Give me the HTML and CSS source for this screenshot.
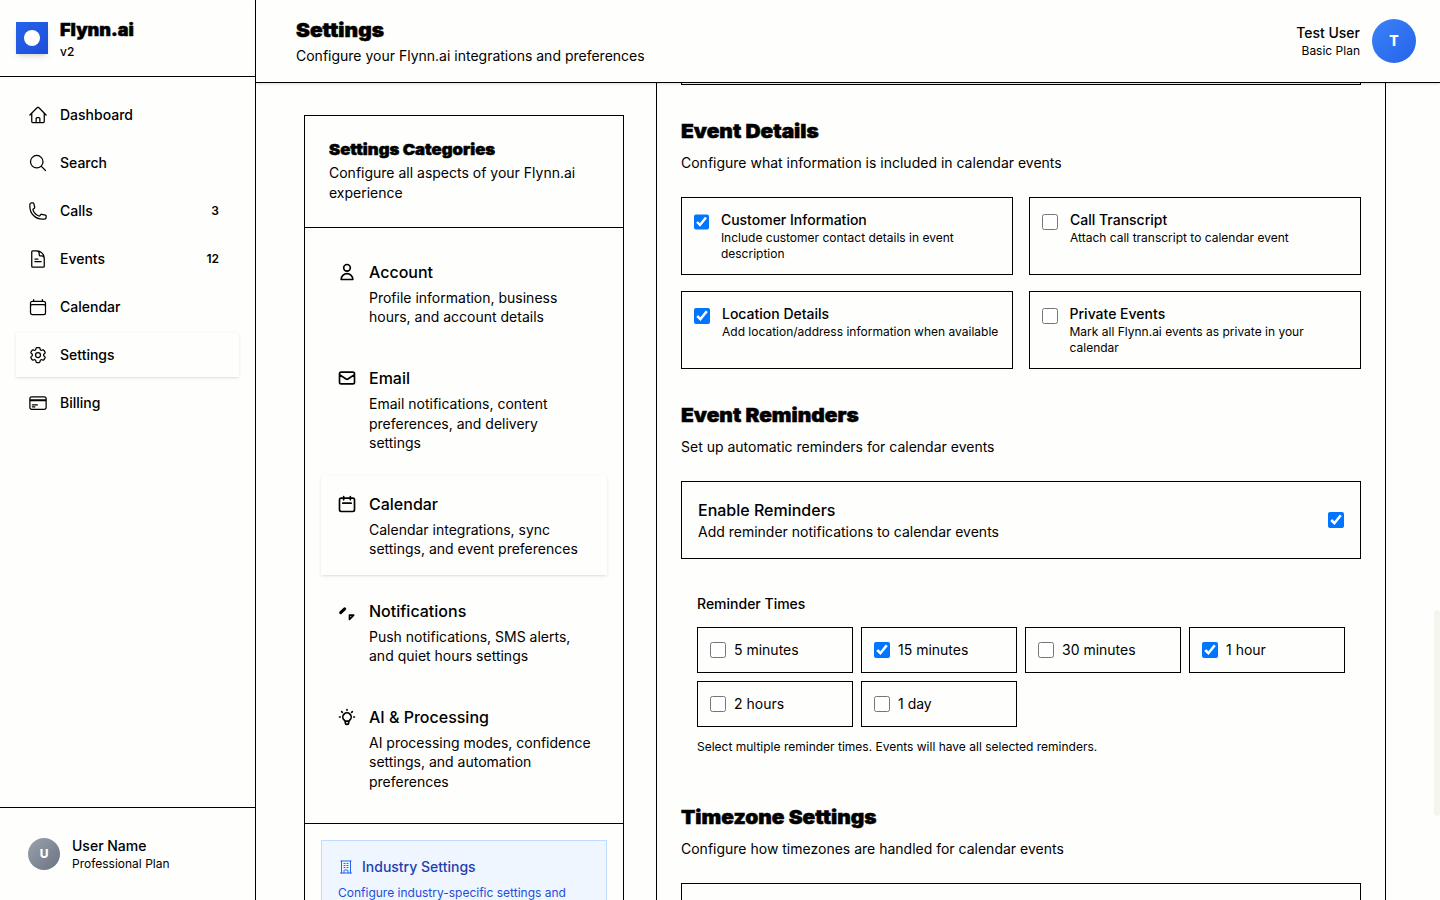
FILE: index.html
```html
<!DOCTYPE html>
<html lang="en">
<head>
<meta charset="utf-8">
<title>Settings - Flynn.ai</title>
<link rel="stylesheet" href="styles.css">
</head>
<body>
<div class="app">
  <aside class="sidebar">
    <div class="brand">
      <div class="logo"><span class="logo-dot"></span></div>
      <div><div class="display brand-name">Flynn.ai</div><div class="brand-version">v2</div></div>
    </div>
    <nav class="nav">
      <a class="nav-item"><svg class="icon" viewBox="0 0 24 24"><path d="M2.25 12l8.954-8.955c.44-.439 1.152-.439 1.591 0L21.75 12M4.5 9.75v10.125c0 .621.504 1.125 1.125 1.125H9.75v-4.875c0-.621.504-1.125 1.125-1.125h2.25c.621 0 1.125.504 1.125 1.125V21h4.125c.621 0 1.125-.504 1.125-1.125V9.75M8.25 21h8.25"/></svg><span>Dashboard</span></a>
      <a class="nav-item"><svg class="icon" viewBox="0 0 24 24"><path d="M21 21l-5.197-5.197m0 0A7.5 7.5 0 105.196 5.196a7.5 7.5 0 0010.607 10.607z"/></svg><span>Search</span></a>
      <a class="nav-item"><svg class="icon" viewBox="0 0 24 24"><path d="M2.25 6.75c0 8.284 6.716 15 15 15h2.25a2.25 2.25 0 002.25-2.25v-1.372c0-.516-.351-.966-.852-1.091l-4.423-1.106c-.44-.11-.902.055-1.173.417l-.97 1.293c-.282.376-.769.542-1.21.38a12.035 12.035 0 01-7.143-7.143c-.162-.441.004-.928.38-1.21l1.293-.97c.363-.271.527-.734.417-1.173L6.963 3.102a1.125 1.125 0 00-1.091-.852H4.5A2.25 2.25 0 002.25 4.5v2.25z"/></svg><span>Calls</span><span class="count">3</span></a>
      <a class="nav-item"><svg class="icon" viewBox="0 0 24 24"><path d="M19.5 14.25v-2.625a3.375 3.375 0 00-3.375-3.375h-1.5A1.125 1.125 0 0113.5 7.125v-1.5a3.375 3.375 0 00-3.375-3.375H8.25M8.25 15h7.5M8.25 12H12M10.5 2.25H5.625c-.621 0-1.125.504-1.125 1.125v17.25c0 .621.504 1.125 1.125 1.125h12.75c.621 0 1.125-.504 1.125-1.125V11.25a9 9 0 00-9-9z"/></svg><span>Events</span><span class="count">12</span></a>
      <a class="nav-item"><svg class="icon" viewBox="0 0 24 24"><path d="M6.75 3v2.25M17.25 3v2.25M3 18.75V7.5a2.25 2.25 0 012.25-2.25h13.5A2.25 2.25 0 0121 7.5v11.25m-18 0A2.25 2.25 0 005.25 21h13.5A2.25 2.25 0 0021 18.75m-18 0v-7.5A2.25 2.25 0 015.25 9h13.5A2.25 2.25 0 0121 11.25v7.5"/></svg><span>Calendar</span></a>
      <a class="nav-item active"><svg class="icon" viewBox="0 0 24 24"><path d="M9.594 3.94c.09-.542.56-.94 1.11-.94h2.593c.55 0 1.02.398 1.11.94l.213 1.281c.063.374.313.686.645.87.074.04.147.083.22.127.324.196.72.257 1.075.124l1.217-.456a1.125 1.125 0 011.37.49l1.296 2.247a1.125 1.125 0 01-.26 1.431l-1.003.827c-.293.24-.438.613-.431.992a6.759 6.759 0 010 .255c-.007.378.138.75.43.99l1.005.828c.424.35.534.954.26 1.43l-1.298 2.247a1.125 1.125 0 01-1.369.491l-1.217-.456c-.355-.133-.75-.072-1.076.124a6.57 6.57 0 01-.22.128c-.331.183-.581.495-.644.869l-.213 1.28c-.09.543-.56.941-1.11.941h-2.594c-.55 0-1.02-.398-1.11-.94l-.213-1.281c-.062-.374-.312-.686-.644-.87a6.52 6.52 0 01-.22-.127c-.325-.196-.72-.257-1.076-.124l-1.217.456a1.125 1.125 0 01-1.369-.49l-1.297-2.247a1.125 1.125 0 01.26-1.431l1.004-.827c.292-.24.437-.613.43-.992a6.932 6.932 0 010-.255c.007-.378-.138-.75-.43-.99l-1.004-.828a1.125 1.125 0 01-.26-1.43l1.297-2.247a1.125 1.125 0 011.37-.491l1.216.456c.356.133.751.072 1.076-.124.072-.044.146-.087.22-.128.332-.183.582-.495.644-.869l.214-1.281z"/><path d="M15 12a3 3 0 11-6 0 3 3 0 016 0z"/></svg><span>Settings</span></a>
      <a class="nav-item"><svg class="icon" viewBox="0 0 24 24"><path d="M2.25 8.25h19.5M2.25 9h19.5m-16.5 5.25h6m-6 2.25h3m-3.75 3h15a2.25 2.25 0 002.25-2.25V6.75A2.25 2.25 0 0019.5 4.5h-15a2.25 2.25 0 00-2.25 2.25v10.5A2.25 2.25 0 004.5 19.5z"/></svg><span>Billing</span></a>
    </nav>
    <div class="account">
      <div class="avatar avatar-gray">U</div>
      <div><div class="person">User Name</div><div class="plan">Professional Plan</div></div>
    </div>
  </aside>

  <div class="main">
    <header class="topbar">
      <div>
        <h1 class="display page-title">Settings</h1>
        <p class="page-desc">Configure your Flynn.ai integrations and preferences</p>
      </div>
      <div class="profile">
        <div class="profile-text"><div class="person">Test User</div><div class="plan">Basic Plan</div></div>
        <div class="avatar avatar-blue">T</div>
      </div>
    </header>

    <div class="content">
      <section class="categories">
        <div class="categories-head">
          <h2 class="display categories-title">Settings Categories</h2>
          <p class="categories-desc">Configure all aspects of your Flynn.ai experience</p>
        </div>
        <div class="category-list">
          <div class="category"><svg class="icon bold" viewBox="0 0 24 24"><path d="M16 7a4 4 0 11-8 0 4 4 0 018 0zM12 14a7 7 0 00-7 7h14a7 7 0 00-7-7z"/></svg><div><div class="category-name">Account</div><p class="category-desc">Profile information, business hours, and account details</p></div></div>
          <div class="category"><svg class="icon bold" viewBox="0 0 24 24"><path d="M3 8l7.89 5.26a2 2 0 002.22 0L21 8M5 19h14a2 2 0 002-2V7a2 2 0 00-2-2H5a2 2 0 00-2 2v10a2 2 0 002 2z"/></svg><div><div class="category-name">Email</div><p class="category-desc">Email notifications, content preferences, and delivery settings</p></div></div>
          <div class="category active"><svg class="icon bold" viewBox="0 0 24 24"><path d="M8 7V3m8 4V3m-9 8h10M5 21h14a2 2 0 002-2V7a2 2 0 00-2-2H5a2 2 0 00-2 2v12a2 2 0 002 2z"/></svg><div><div class="category-name">Calendar</div><p class="category-desc">Calendar integrations, sync settings, and event preferences</p></div></div>
          <div class="category"><svg class="icon bold" viewBox="0 0 24 24"><path d="M15 17h5l-5 5v-5z"/><path stroke-width="3.6" class="dash" d="M4.4 14L9.2 9.4"/></svg><div><div class="category-name">Notifications</div><p class="category-desc">Push notifications, SMS alerts, and quiet hours settings</p></div></div>
          <div class="category"><svg class="icon bold" viewBox="0 0 24 24"><path d="M9.663 17h4.673M12 3v1m6.364 1.636l-.707.707M21 12h-1M4 12H3m3.343-5.657l-.707-.707m2.828 9.9a5 5 0 117.072 0l-.548.547A3.374 3.374 0 0014 18.469V19a2 2 0 11-4 0v-.531c0-.895-.356-1.754-.988-2.386l-.548-.547z"/></svg><div><div class="category-name">AI &amp; Processing</div><p class="category-desc">AI processing modes, confidence settings, and automation preferences</p></div></div>
        </div>
        <div class="industry-wrap">
          <div class="industry">
            <div class="industry-head"><svg class="icon small" viewBox="0 0 24 24"><path d="M3.75 21h16.5M4.5 3h15M5.25 3v18m13.5-18v18M9 6.75h1.5m-1.5 3h1.5m-1.5 3h1.5m3-6H15m-1.5 3H15m-1.5 3H15M9 21v-3.375c0-.621.504-1.125 1.125-1.125h3.75c.621 0 1.125.504 1.125 1.125V21"/></svg><span>Industry Settings</span></div>
            <p class="industry-desc">Configure industry-specific settings and</p>
          </div>
        </div>
      </section>

      <section class="panel">
        <div class="previous-box"></div>
        <div class="group">
          <h2 class="display group-title">Event Details</h2>
          <p class="group-desc">Configure what information is included in calendar events</p>
          <div class="options">
            <label class="option"><input type="checkbox" checked><div><div class="option-name">Customer Information</div><div class="option-desc">Include customer contact details in event description</div></div></label>
            <label class="option"><input type="checkbox"><div><div class="option-name">Call Transcript</div><div class="option-desc">Attach call transcript to calendar event</div></div></label>
            <label class="option"><input type="checkbox" checked><div><div class="option-name">Location Details</div><div class="option-desc">Add location/address information when available</div></div></label>
            <label class="option"><input type="checkbox"><div><div class="option-name">Private Events</div><div class="option-desc">Mark all Flynn.ai events as private in your calendar</div></div></label>
          </div>
        </div>
        <div class="group">
          <h2 class="display group-title">Event Reminders</h2>
          <p class="group-desc">Set up automatic reminders for calendar events</p>
          <label class="toggle-row"><div><div class="toggle-name">Enable Reminders</div><div class="toggle-desc">Add reminder notifications to calendar events</div></div><input type="checkbox" checked></label>
          <div class="reminders">
            <div class="reminders-label">Reminder Times</div>
            <div class="times">
              <label class="time"><input type="checkbox"><span>5 minutes</span></label>
              <label class="time"><input type="checkbox" checked><span>15 minutes</span></label>
              <label class="time"><input type="checkbox"><span>30 minutes</span></label>
              <label class="time"><input type="checkbox" checked><span>1 hour</span></label>
              <label class="time"><input type="checkbox"><span>2 hours</span></label>
              <label class="time"><input type="checkbox"><span>1 day</span></label>
            </div>
            <p class="hint">Select multiple reminder times. Events will have all selected reminders.</p>
          </div>
        </div>
        <div class="group">
          <h2 class="display group-title">Timezone Settings</h2>
          <p class="group-desc">Configure how timezones are handled for calendar events</p>
          <div class="timezone-box"></div>
        </div>
      </section>
      <div class="scroll-thumb"></div>
    </div>
  </div>
</div>
</body>
</html>
```
FILE: styles.css
```css
* { box-sizing: border-box; }
body, h1, h2, p { margin: 0; }
body {
  background: #fefefc;
  color: #000;
  font: 400 14px/20px Inter, "Liberation Sans", sans-serif;
}
.app { display: flex; width: 1440px; height: 900px; overflow: hidden; }
.display {
  font-weight: 900;
  -webkit-text-stroke: 0.5px #000;
  transform: translateY(1px) scaleX(1.1);
  transform-origin: left center;
  width: max-content;
}

.icon {
  width: 20px; height: 20px; flex: none;
  fill: none; stroke: currentColor; stroke-width: 1.5;
  stroke-linecap: round; stroke-linejoin: round;
}
.icon.bold { stroke-width: 2; }
.icon.small { width: 16px; height: 16px; color: #2563eb; }

/* Sidebar */
.sidebar { width: 256px; display: flex; flex-direction: column; border-right: 1px solid #000; }
.brand { height: 77px; display: flex; align-items: center; gap: 12px; padding: 0 16px; border-bottom: 1px solid #000; }
.logo {
  width: 32px; height: 32px; display: grid; place-items: center;
  background: linear-gradient(135deg, #2563eb, #1d4ed8);
  box-shadow: 0 4px 6px -1px rgba(0, 0, 0, .1), 0 2px 4px -2px rgba(0, 0, 0, .1);
}
.logo-dot { width: 16px; height: 16px; border-radius: 50%; background: #fff; }
.brand-name { font-size: 17.2px; line-height: 28px; transform: scaleX(1.05); }
.brand-version { font-size: 12px; line-height: 16px; font-weight: 500; }
.nav { flex: 1; display: flex; flex-direction: column; gap: 4px; padding: 16px; }
.nav-item { height: 44px; display: flex; align-items: center; gap: 12px; padding: 0 12px; font-weight: 500; }
.active { box-shadow: 0 1px 3px rgba(0, 0, 0, .1), 0 1px 2px -1px rgba(0, 0, 0, .1); }
.count { margin-left: auto; padding-right: 8px; font-size: 12px; font-weight: 600; }
.account { height: 93px; display: flex; align-items: center; gap: 12px; padding: 0 28px; border-top: 1px solid #000; }
.avatar { display: grid; place-items: center; border-radius: 50%; color: #fff; font-weight: 800; }
.avatar-gray { width: 32px; height: 32px; font-size: 12px; background: linear-gradient(135deg, #9ca3af, #6b7280); }
.avatar-blue { width: 44px; height: 44px; background: linear-gradient(135deg, #3b82f6, #2563eb); }
.person { font-weight: 500; line-height: 20px; }
.plan { font-size: 12px; line-height: 16px; }

/* Top bar */
.main { flex: 1; min-width: 0; display: flex; flex-direction: column; }
.topbar {
  height: 83px; flex: none; z-index: 1;
  display: flex; align-items: center; justify-content: space-between;
  padding: 0 24px 0 40px; border-bottom: 1px solid #000;
  box-shadow: 0 1px 3px rgba(0, 0, 0, .1), 0 1px 2px -1px rgba(0, 0, 0, .1);
}
.page-title { font-size: 19px; line-height: 28px; }
.page-desc { margin-top: 2px; }
.profile { display: flex; align-items: center; gap: 12px; }
.profile-text { text-align: right; }

/* Settings categories */
.content { position: relative; flex: 1; min-height: 0; display: flex; align-items: stretch; padding: 0 54px 0 48px; overflow: hidden; }
.categories { width: 320px; flex: none; margin: 32px 32px 0 0; border: 1px solid #000; border-bottom: 0; }
.categories-head { height: 112px; padding: 23px 24px; border-bottom: 1px solid #000; }
.categories-title { font-size: 15.2px; line-height: 20px; }
.categories-desc { margin-top: 4px; line-height: 19.6px; }
.category-list { display: flex; flex-direction: column; gap: 7.9375px; padding: 16px 16px 16.25px; }
.category { display: flex; gap: 12px; padding: 16px; }
.category .icon { margin-top: 2px; }
.category-name { font-size: 16px; line-height: 24px; font-weight: 500; }
.category-desc { margin-top: 4px; line-height: 19.25px; }
.industry-wrap { padding: 16px; border-top: 1px solid #000; }
.industry { height: 120px; padding: 16px; border: 1px solid #bfdbfe; background: #eff6ff; }
.industry-head { display: flex; align-items: center; gap: 8px; color: #1e40af; font-weight: 500; }
.industry-desc { margin-top: 8px; color: #1d4ed8; font-size: 12px; line-height: 16px; white-space: nowrap; }

/* Calendar panel */
.panel { flex: 1; min-width: 0; padding: 0 24px; border: solid #000; border-width: 0 1px; }
.previous-box { height: 2px; border: solid #000; border-width: 0 1px 1px; }
.group { margin-top: 32px; }
.group-title { font-size: 19px; line-height: 28px; }
.group-desc { margin-top: 8px; }
input { width: 16px; height: 16px; margin: 0; }
.options { display: grid; grid-template-columns: 1fr 1fr; gap: 16px; margin-top: 24px; }
.option { display: flex; align-items: flex-start; gap: 12px; height: 78px; padding: 12px; border: 1px solid #000; }
.option input { margin-top: 4px; }
.option-name { font-weight: 500; }
.option-desc { font-size: 12px; line-height: 16px; }
.toggle-row { display: flex; align-items: center; justify-content: space-between; margin-top: 24px; padding: 16px; border: 1px solid #000; }
.toggle-name { font-size: 16px; line-height: 24px; font-weight: 500; }
.reminders { padding: 35px 16px 16px; }
.reminders-label { font-weight: 500; }
.times { display: grid; grid-template-columns: repeat(4, 1fr); gap: 8px; margin-top: 13px; }
.time { display: flex; align-items: center; gap: 8px; height: 46px; padding: 0 12px; border: 1px solid #000; }
.hint { margin-top: 12px; font-size: 12px; line-height: 16px; }
.timezone-box { height: 60px; margin-top: 24px; border: 1px solid #000; }
.scroll-thumb { position: absolute; right: 0; top: 527px; width: 6px; height: 206px; border-radius: 3px; background: #f5f5f0; }
```
